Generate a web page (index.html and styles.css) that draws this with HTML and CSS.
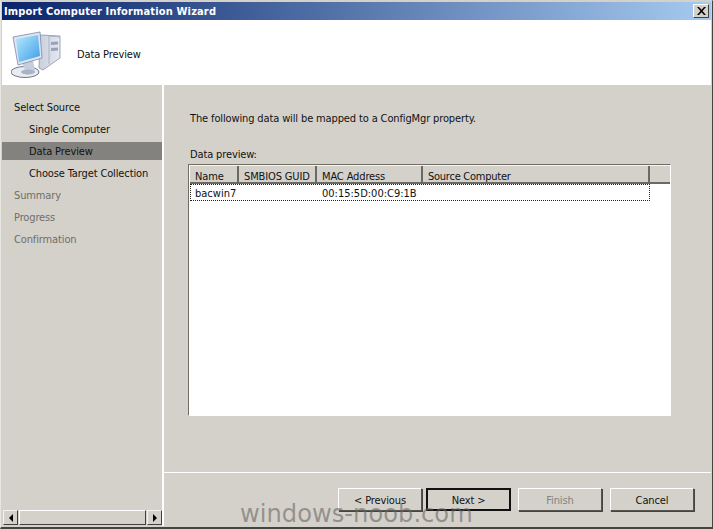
FILE: index.html
```html
<!DOCTYPE html>
<html lang="en">
<head>
<meta charset="utf-8">
<title>Import Computer Information Wizard</title>
<link rel="stylesheet" href="styles.css">
</head>
<body>
<div class="window">
  <div class="titlebar">
    <span class="title">Import Computer Information Wizard</span>
    <button class="close" aria-label="Close"><svg width="9" height="8" viewBox="0 0 9 8"><path d="M0 0h2l2.500 2.800L7 0h2L5.500 4 9 8H7L4.500 5.200 2 8H0l3.500-4z" fill="#000"/></svg></button>
  </div>
  <header class="banner">
    <svg class="icon" width="50" height="48" viewBox="0 0 50 48">
      <defs>
        <linearGradient id="scr" x1="0" y1="0" x2="1" y2="1"><stop offset="0" stop-color="#b5ebfc"/><stop offset="1" stop-color="#3f9ce9"/></linearGradient>
        <linearGradient id="case" x1="0" y1="0" x2="1" y2="0"><stop offset="0" stop-color="#c9cfdc"/><stop offset="1" stop-color="#e4e8f0"/></linearGradient>
      </defs>
      <path d="M29 5l20 1v22l-17 12-4-2z" fill="url(#case)" stroke="#8a92a8" stroke-width=".8"/>
      <path d="M38 6v28M38 6l11 1" stroke="#a0a8bc" stroke-width=".8" fill="none"/>
      <path d="M40 12l7-.5v3l-7 .5zM40 18l7-.5v3l-7 .5z" fill="#99a2b8"/>
      <ellipse cx="14" cy="42" rx="14" ry="5.500" fill="#e9ecf3" stroke="#5f6880" stroke-width=".9"/>
      <path d="M11 33l11-3 2 11-8 4z" fill="#c6cede"/>
      <ellipse cx="17" cy="42" rx="7" ry="2.500" fill="#a9b2c6"/>
      <path d="M2 7l27-5 2 26-24 7z" fill="#dde4f3" stroke="#7d88a6" stroke-width=".8"/>
      <path d="M5 9l22-4 2 21-21 6z" fill="url(#scr)"/>
    </svg>
    <span class="banner-text">Data Preview</span>
  </header>
  <div class="main">
    <aside class="sidebar">
      <nav class="steps">
        <div class="step">Select Source</div>
        <div class="step sub">Single Computer</div>
        <div class="step sub current">Data Preview</div>
        <div class="step sub">Choose Target Collection</div>
        <div class="step off">Summary</div>
        <div class="step off">Progress</div>
        <div class="step off">Confirmation</div>
      </nav>
      <div class="hscroll">
        <div class="sbtn"><span class="arrow left"></span></div>
        <div class="thumb"></div>
        <div class="sbtn"><span class="arrow right"></span></div>
      </div>
    </aside>
    <section class="content">
      <div class="body">
        <p class="intro">The following data will be mapped to a ConfigMgr property.</p>
        <div class="label">Data preview:</div>
        <div class="list">
          <div class="head">
            <div class="col c1">Name</div>
            <div class="col c2">SMBIOS GUID</div>
            <div class="col c3">MAC Address</div>
            <div class="col c4">Source Computer</div>
            <div class="col c5"></div>
          </div>
          <div class="row">
            <div class="cell c1">bacwin7</div>
            <div class="cell c2"></div>
            <div class="cell c3">00:15:5D:00:C9:1B</div>
            <div class="cell c4"></div>
          </div>
        </div>
      </div>
      <footer class="footer">
        <button class="btn">&lt; Previous</button>
        <button class="btn default">Next &gt;</button>
        <button class="btn disabled">Finish</button>
        <button class="btn">Cancel</button>
      </footer>
    </section>
  </div>
  <div class="watermark">windows-noob.com</div>
</div>
</body>
</html>
```
FILE: styles.css
```css
* { box-sizing: border-box; }
html, body { margin: 0; padding: 0; }
body { width: 713px; height: 529px; overflow: hidden; background: #d4d1cb; font-family: "DejaVu Sans Condensed", "DejaVu Sans", sans-serif; font-size: 11px; letter-spacing: -0.13px; color: #111; }
.window { position: relative; width: 713px; height: 529px; display: flex; flex-direction: column; background: #d4d1cb; border-right: 1px solid #45443f; border-bottom: 2px solid #45443f; border-left: 1px solid #e8e6e0; border-top: 1px solid #d4d1cb; padding: 1px 1px 1px 1px; }
.titlebar { height: 18px; flex: none; display: flex; align-items: center; justify-content: space-between; padding: 0 2px 0 2px; background: linear-gradient(90deg, #0a246a, #a6caf0); }
.title { color: #fff; font-weight: bold; font-size: 11px; letter-spacing: 0.15px; }
.close { width: 16px; height: 14px; padding: 0; display: flex; align-items: center; justify-content: center; background: #d4d1cb; border: 1px solid; border-color: #fff #404040 #404040 #fff; }
.banner { height: 65px; flex: none; display: flex; align-items: center; background: #fff; padding-left: 9px; gap: 16px; }
.icon { flex: none; margin-top: 3px; }
.banner-text { font-size: 11px; padding-top: 4px; }
.main { flex: 1; display: flex; min-height: 0; }
.sidebar { width: 160px; flex: none; display: flex; flex-direction: column; justify-content: space-between; padding-top: 13px; }
.steps { display: flex; flex-direction: column; gap: 4px; }
.step { height: 18px; line-height: 20px; padding-left: 12px; }
.step.sub { padding-left: 27px; }
.step.current { background: #84827f; }
.step.off { color: #6f6e6a; }
.hscroll { height: 15px; display: flex; margin-bottom: 1px; padding-left: 1px; }
.sbtn { width: 15px; flex: none; display: flex; align-items: center; justify-content: center; background: #d4d1cb; border: 1px solid; border-color: #f4f3ef #404040 #404040 #f4f3ef; }
.thumb { flex: 1; margin: 0 1px; background: #d4d1cb; border: 1px solid; border-color: #fff #404040 #404040 #fff; }
.arrow { width: 0; height: 0; border-top: 4px solid transparent; border-bottom: 4px solid transparent; }
.arrow.left { border-right: 4px solid #000; }
.arrow.right { border-left: 4px solid #000; }
.content { flex: 1; display: flex; flex-direction: column; min-width: 0; border-left: 2px solid #fff; }
.body { flex: 1; padding: 27px 0 0 24px; border-bottom: 1px solid #fff; }
.intro { margin: 0; height: 13px; line-height: 13px; padding-left: 2px; }
.label { margin-top: 23px; height: 13px; line-height: 13px; padding-left: 2px; }
.list { margin-top: 3px; width: 483px; height: 252px; background: #fff; border: 1px solid; border-color: #716f64 #fff #fff #716f64; padding: 0 0 0 1px; }
.head { display: flex; height: 19px; background: #d4d1cb; border-top: 1px solid #f4f3ef; border-bottom: 2px solid #6a6964; }
.col { height: 16px; line-height: 22px; padding-left: 5px; border-right: 2px solid #6a6964; flex: none; }
.col.c4 { letter-spacing: -0.25px; }
.c1 { width: 49px; }
.c2 { width: 78px; }
.c3 { width: 106px; }
.c4 { width: 227px; }
.c5 { flex: 1; border-right: 0; }
.row { display: flex; height: 17px; width: 460px; border: 1px dotted #222; }
.cell { line-height: 18px; padding-left: 5px; flex: none; letter-spacing: 0; }
.row .c1 { width: 48px; padding-left: 4px; }
.footer { height: 53px; flex: none; display: flex; align-items: flex-start; padding: 15px 0 0 174px; gap: 4px; }
.btn { width: 84px; height: 23px; padding: 2px 0 0; font: inherit; letter-spacing: -0.13px; color: #111; text-align: center; background: #d4d1cb; border: 1px solid; border-color: #fff #55544f #55544f #fff; box-shadow: 1px 1px 0 #45443f; }
.btn.default { width: 85px; border: 2px solid #111; margin-right: 3px; box-shadow: none; }
.btn.disabled { color: #85837d; margin-right: 4px; }
.watermark { position: absolute; left: 239px; top: 498px; font-family: "DejaVu Sans", sans-serif; font-size: 24.2px; letter-spacing: 0; line-height: 30px; color: rgba(105, 102, 98, 0.6); white-space: nowrap; }
```
